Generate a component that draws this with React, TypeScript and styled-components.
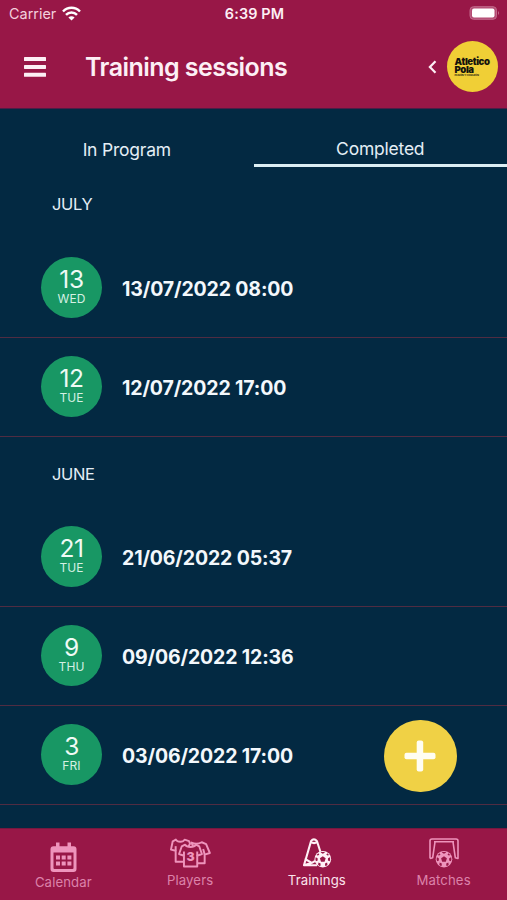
import React from "react";
import styled, { createGlobalStyle } from "styled-components";

const GlobalStyle = createGlobalStyle`
  *, *::before, *::after { box-sizing: border-box; }
  html, body { margin: 0; padding: 0; background: #032942; }
  body { font-family: Inter, "Liberation Sans", sans-serif; overflow: hidden; }
  button { font: inherit; color: inherit; background: none; border: 0; padding: 0; margin: 0; }
`;

const CRIMSON = "#981747";
const PINK = "#ee94bc";

const Screen = styled.div`
  width: 507px;
  height: 900px;
  display: flex;
  flex-direction: column;
  position: relative;
  overflow: hidden;
  background: #032942;
  color: #e4eef6;
`;

const Header = styled.header`
  flex: none;
  height: 109px;
  background: ${CRIMSON};
  border-bottom: 1px solid #4c1d46;
  color: #fdeff5;
`;

const StatusBar = styled.div`
  height: 26px;
  display: grid;
  grid-template-columns: 1fr auto 1fr;
  align-items: center;
  padding: 1px 7px 0 9px;
`;

const Carrier = styled.div`
  display: flex;
  align-items: center;
  gap: 6px;
  font-size: 14.4px;
  letter-spacing: 0.02px;
  color: #f3cfdd;
`;

const Clock = styled.div`
  font-size: 14.4px;
  font-weight: 600;
  letter-spacing: 0.15px;
`;

const BatterySlot = styled.div`
  display: flex;
  justify-content: flex-end;
  padding-bottom: 1px;
`;

const TitleBar = styled.div`
  height: 81px;
  display: flex;
  align-items: center;
  padding: 0 9px 0 24px;
`;

const IconButton = styled.button`
  display: flex;
`;

const Title = styled.h1`
  flex: 1;
  margin: 0 0 0 39px;
  font-size: 25px;
  line-height: 30px;
  font-weight: 600;
  letter-spacing: -0.55px;
`;

const ClubBadge = styled.div`
  width: 51.500px;
  height: 51.500px;
  margin-left: 10px;
  padding: 17px 0 0 8px;
  border-radius: 50%;
  background: #f0cf36;
  color: #15130d;
`;

const ClubName = styled.div`
  display: flex;
  flex-direction: column;
  font-size: 9.6px;
  line-height: 7.8px;
  font-weight: 900;
  letter-spacing: -0.4px;
`;

const ClubMotto = styled.div`
  margin-top: 1px;
  font-size: 2.5px;
  line-height: 3px;
  font-weight: 700;
  letter-spacing: -0.05px;
  white-space: nowrap;
`;

const Tabs = styled.nav`
  flex: none;
  display: grid;
  grid-template-columns: 1fr 1fr;
  height: 58px;
`;

const Tab = styled.button<{ $active?: boolean }>`
  padding-top: ${(p) => (p.$active ? 24 : 23)}px;
  font-size: 17.5px;
  line-height: 22px;
  letter-spacing: -0.22px;
  text-align: center;
  border-bottom: ${(p) => (p.$active ? "3px solid #dceef3" : "0")};
`;

const Sessions = styled.main`
  flex: 1;
  min-height: 0;
  overflow: hidden;
`;

const Month = styled.h2<{ $first?: boolean }>`
  margin: 0;
  height: ${(p) => (p.$first ? 72 : 71)}px;
  padding: 26px 0 0 52px;
  font-size: 16.5px;
  line-height: 22px;
  font-weight: 400;
  letter-spacing: -0.35px;
`;

const Row = styled.div`
  height: 99px;
  display: flex;
  align-items: center;
  padding-left: 41px;
  border-bottom: 1px solid #502c42;
`;

const DayBadge = styled.div`
  width: 61px;
  height: 61px;
  margin-bottom: 1px;
  border-radius: 50%;
  background: #189764;
  display: flex;
  flex-direction: column;
  align-items: center;
  padding-top: 9px;
  color: #effaf5;
`;

const DayNumber = styled.span`
  font-size: 24.500px;
  line-height: 26px;
  letter-spacing: -0.4px;
`;

const DayName = styled.span`
  font-size: 12px;
  line-height: 13px;
  letter-spacing: 0.1px;
  color: #d5f0e3;
`;

const DateText = styled.div`
  margin: 1px 0 0 20px;
  font-size: 19.5px;
  font-weight: 700;
  letter-spacing: -0.14px;
  color: #f3f8fc;
`;

const AddButton = styled.button`
  position: absolute;
  left: 384px;
  top: 719.5px;
  width: 72.5px;
  height: 72.5px;
  border-radius: 50%;
  background: #f0d145;
  display: flex;
  align-items: center;
  justify-content: center;
`;

const Footer = styled.nav`
  flex: none;
  height: 72px;
  background: ${CRIMSON};
  border-top: 1px solid #74183f;
  display: grid;
  grid-template-columns: repeat(4, 1fr);
`;

const FooterItem = styled.button<{ $active?: boolean; $low?: boolean }>`
  display: flex;
  flex-direction: column;
  align-items: center;
  gap: ${(p) => (p.$low ? 2 : 4.5)}px;
  padding-top: ${(p) => (p.$low ? 12.5 : 8.5)}px;
  color: ${(p) => (p.$active ? "#fff0f6" : PINK)};
`;

const FooterLabel = styled.span<{ $active?: boolean }>`
  font-size: 13.2px;
  line-height: 16px;
  letter-spacing: 0.1px;
  color: ${(p) => (p.$active ? "#fbe3ec" : "#dc82aa")};
`;

const WifiIcon = () => (
  <svg width="19" height="15" viewBox="0 0 19 15" fill="none" stroke="#fff" strokeWidth="2.5">
    <path d="M1 5.500c4.800-4.900 12.200-4.900 17 0" />
    <path d="M4 8.900c3.100-3.200 7.900-3.200 11 0" />
    <path d="m9.500 14.500-3.100-3.100c1.700-1.600 4.500-1.600 6.200 0z" fill="#fff" stroke="none" />
  </svg>
);

const BatteryIcon = () => (
  <svg width="31" height="14" viewBox="0 0 31 14">
    <rect x="1" y=".7" width="26.500" height="12.600" rx="3.500" fill="#b44b73" stroke="#c26a8c" />
    <rect x="3" y="2.500" width="22.500" height="9" rx="2" fill="#fff" />
    <path d="M29 5q2 2 0 4z" fill="#c26a8c" />
  </svg>
);

const MenuIcon = () => (
  <svg width="22" height="20" viewBox="0 0 22 20" fill="currentColor">
    <rect y="0" width="22" height="4" rx=".6" />
    <rect y="7.900" width="22" height="4" rx=".6" />
    <rect y="15.800" width="22" height="4" rx=".6" />
  </svg>
);

const BackIcon = () => (
  <svg width="9" height="14" viewBox="0 0 9 14" fill="none" stroke="currentColor" strokeWidth="2.200">
    <path d="M7.500 1.300 1.900 7l5.600 5.700" />
  </svg>
);

const PlusIcon = () => (
  <svg width="32" height="32" viewBox="0 0 32 32" fill="#fffdf2">
    <rect x="12.700" y=".5" width="6.500" height="31" rx="2" />
    <rect x=".5" y="12.700" width="31" height="6.500" rx="2" />
  </svg>
);

const CalendarIcon = () => (
  <svg width="27" height="30" viewBox="0 0 27 30">
    <path
      fill="currentColor"
      fillRule="evenodd"
      d="M6 .5h3.500v3.800h8V.5H21v3.800h2.500a3 3 0 0 1 3 3V27a3 3 0 0 1-3 3h-20a3 3 0 0 1-3-3V7.300a3 3 0 0 1 3-3H6zM3.500 10.500V26q0 1 1 1h18q1 0 1-1V10.500z"
    />
    <g fill="currentColor">
      <path d="M6 13.500h4v4H6zM11.700 13.500h4v4h-4zM17.400 13.500h4v4h-4zM6 19.500h4v4H6zM11.700 19.500h4v4h-4zM17.400 19.500h4v4h-4z" />
    </g>
  </svg>
);

const ShirtNumber = styled.text`
  font-family: Inter, sans-serif;
  font-size: 12.5px;
  font-weight: 900;
`;

const ShirtsIcon = () => (
  <svg width="41" height="30" viewBox="0 0 42 30" stroke="currentColor" strokeWidth="2" strokeLinejoin="round" fill={CRIMSON}>
    <path d="M6 1.300 2.800 3 1 11.500l4.800 1.200V24H18V10l2.500-4.500-1-2.700L15 1.300c-1.500 2.800-7.500 2.800-9 0z" />
    <path d="M5.800 12.700V8" />
    <path d="M22 4.300q5.500 2.400 10.500-.3L37 6l3.800 9-5.300 1.600v9H24V9z" />
    <path d="M35.500 16.600 34 11" />
    <path d="M15.500 6.500 12 8.300 9.300 16l5 1.800v11h13.600v-11l4.800-1.800L30 8.300l-3.500-1.800c-1.800 3-9.200 3-11 0z" />
    <path d="M14.300 17.800v-4.300M27.900 17.800v-4.300" />
    <ShirtNumber x="16.800" y="23.200" fill="currentColor" stroke="none">3</ShirtNumber>
  </svg>
);

const Ball = ({ x, y }: { x: number; y: number }) => (
  <g transform={`translate(${x} ${y})`} stroke="none">
    <circle r="8.300" fill="currentColor" />
    <g fill={CRIMSON}>
      <path d="m0-3 2.900 2.100-1.100 3.400h-3.600L-2.900-.9z" />
      <path d="m-2.200-6.700 2.200 1.200 2.200-1.200L1.300-7.200h-2.600zM7.100-2 5.200-1l-.1 2.200 1.800.9.500-2zM4.700 5.600l-.4-2.200-2.100.8.100 2.400 1 .2zM-4.700 5.600l.4-2.200 2.100.8-.1 2.400-1 .2zM-7.100-2l1.900 1 .1 2.200-1.800.9-.5-2zM3.500-4.500l1.500.9 1.200-.7-1.700-1.700zM-3.500-4.500l-1.500.9-1.200-.7 1.700-1.700z" />
    </g>
  </g>
);

const ConeIcon = () => (
  <svg width="30" height="30" viewBox="0 0 30 30" fill="none" stroke="currentColor" strokeWidth="2.100" strokeLinejoin="round">
    <path d="M3.700 21.500 9 3.200q2.800-3.600 6 0l3.400 10.500M8.800 4.200q3.200 1.800 6.500 0" />
    <path d="M3.900 20.500 2 27.200h13M3.900 21.500l6 3.300 3.300-2M2 27.200l7.900-2.400" />
    <Ball x={20.800} y={21.200} />
  </svg>
);

const GoalIcon = () => (
  <svg width="30" height="30" viewBox="0 0 30 30" fill="none" stroke="currentColor" strokeWidth="1.600" strokeLinejoin="round">
    <path d="M1 20.500V3q0-2 2-2h24q2 0 2 2v17.500l-2.700-.8L24 4M1 20.500l2.700-.8L6 4M5 3.800h20" />
    <Ball x={15} y={21.200} />
  </svg>
);

type Session = { day: string; name: string; date: string };

const months: { label: string; sessions: Session[] }[] = [
  {
    label: "JULY",
    sessions: [
      { day: "13", name: "WED", date: "13/07/2022 08:00" },
      { day: "12", name: "TUE", date: "12/07/2022 17:00" },
    ],
  },
  {
    label: "JUNE",
    sessions: [
      { day: "21", name: "TUE", date: "21/06/2022 05:37" },
      { day: "9", name: "THU", date: "09/06/2022 12:36" },
      { day: "3", name: "FRI", date: "03/06/2022 17:00" },
    ],
  },
];

export default function App() {
  return (
    <>
      <GlobalStyle />
      <Screen>
        <Header>
          <StatusBar>
            <Carrier>
              Carrier
              <WifiIcon />
            </Carrier>
            <Clock>6:39 PM</Clock>
            <BatterySlot>
              <BatteryIcon />
            </BatterySlot>
          </StatusBar>
          <TitleBar>
            <IconButton aria-label="Menu">
              <MenuIcon />
            </IconButton>
            <Title>Training sessions</Title>
            <IconButton aria-label="Back">
              <BackIcon />
            </IconButton>
            <ClubBadge>
              <ClubName>
                <span>Atletico</span>
                <span>Pola</span>
              </ClubName>
              <ClubMotto>PASIÓN Y CORAZÓN</ClubMotto>
            </ClubBadge>
          </TitleBar>
        </Header>
        <Tabs>
          <Tab>In Program</Tab>
          <Tab $active>Completed</Tab>
        </Tabs>
        <Sessions>
          {months.map((month, i) => (
            <section key={month.label}>
              <Month $first={i === 0}>{month.label}</Month>
              {month.sessions.map((s) => (
                <Row key={s.date}>
                  <DayBadge>
                    <DayNumber>{s.day}</DayNumber>
                    <DayName>{s.name}</DayName>
                  </DayBadge>
                  <DateText>{s.date}</DateText>
                </Row>
              ))}
            </section>
          ))}
        </Sessions>
        <Footer>
          <FooterItem $low>
            <CalendarIcon />
            <FooterLabel>Calendar</FooterLabel>
          </FooterItem>
          <FooterItem>
            <ShirtsIcon />
            <FooterLabel>Players</FooterLabel>
          </FooterItem>
          <FooterItem $active>
            <ConeIcon />
            <FooterLabel $active>Trainings</FooterLabel>
          </FooterItem>
          <FooterItem>
            <GoalIcon />
            <FooterLabel>Matches</FooterLabel>
          </FooterItem>
        </Footer>
        <AddButton aria-label="Add training session">
          <PlusIcon />
        </AddButton>
      </Screen>
    </>
  );
}
